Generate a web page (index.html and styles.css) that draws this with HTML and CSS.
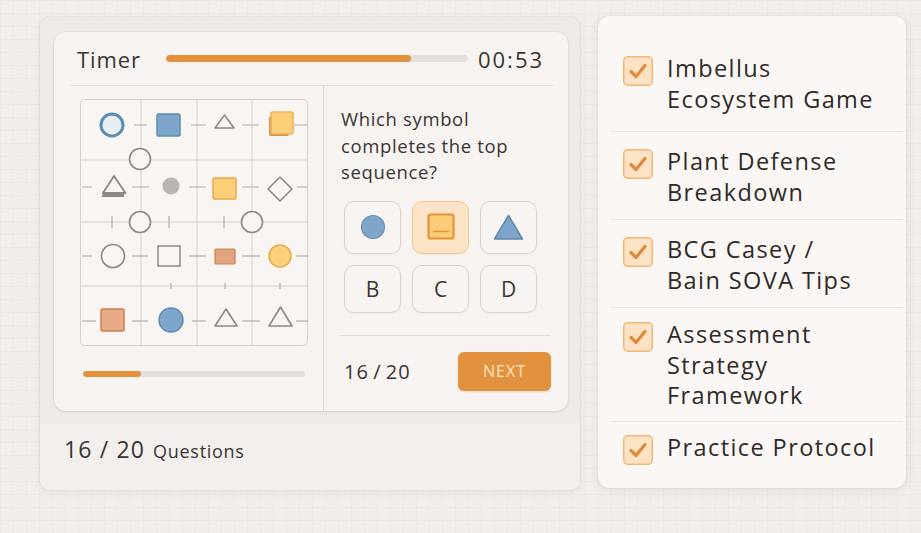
FILE: index.html
```html
<!DOCTYPE html>
<html lang="en">
<head>
<meta charset="utf-8">
<title>Assessment practice</title>
<link rel="stylesheet" href="styles.css">
</head>
<body>
<div class="stage">
  <section class="quiz">
    <div class="quiz-top">
      <div class="card">
        <header class="card-head">
          <span class="title">Timer</span>
          <div class="track timer-track"><div class="fill" style="width:81%"></div></div>
          <span class="time">00:53</span>
        </header>
        <div class="card-body">
          <div class="puzzle-col">
            <svg class="puzzle" width="228" height="247" viewBox="0 0 228 247">
              <rect x="0.5" y="0.5" width="227" height="246" rx="4" fill="#f8f5f3" stroke="#d6d0cd"/>
              <g stroke="#d6d0cd" stroke-width="1">
                <line x1="61" y1="1" x2="61" y2="246"/>
                <line x1="117" y1="1" x2="117" y2="246"/>
                <line x1="172" y1="1" x2="172" y2="246"/>
                <line x1="1" y1="61" x2="227" y2="61"/>
                <line x1="1" y1="123" x2="227" y2="123"/>
                <line x1="1" y1="187" x2="227" y2="187"/>
              </g>
              <g stroke="#b4aeab" stroke-width="1.2">
                <line x1="54" y1="26" x2="67" y2="26"/>
                <line x1="111" y1="26" x2="126" y2="26"/>
                <line x1="162" y1="26" x2="179" y2="26"/>
                <line x1="214" y1="26" x2="228" y2="26"/>
                <line x1="2" y1="88" x2="12" y2="88"/>
                <line x1="52" y1="88" x2="69" y2="88"/>
                <line x1="109" y1="88" x2="126" y2="88"/>
                <line x1="162" y1="88" x2="179" y2="88"/>
                <line x1="217" y1="88" x2="228" y2="88"/>
                <line x1="32" y1="117" x2="32" y2="129"/>
                <line x1="89" y1="117" x2="89" y2="129"/>
                <line x1="144" y1="117" x2="144" y2="129"/>
                <line x1="2" y1="157" x2="12" y2="157"/>
                <line x1="52" y1="157" x2="68" y2="157"/>
                <line x1="109" y1="157" x2="126" y2="157"/>
                <line x1="162" y1="157" x2="180" y2="157"/>
                <line x1="216" y1="157" x2="228" y2="157"/>
                <line x1="91" y1="184" x2="91" y2="190"/>
                <line x1="145" y1="184" x2="145" y2="190"/>
                <line x1="200" y1="184" x2="200" y2="190"/>
                <line x1="2" y1="222" x2="16" y2="222"/>
                <line x1="52" y1="222" x2="68" y2="222"/>
                <line x1="112" y1="222" x2="126" y2="222"/>
                <line x1="162" y1="222" x2="180" y2="222"/>
                <line x1="216" y1="222" x2="228" y2="222"/>
              </g>
              <!-- row 1 -->
              <circle cx="32" cy="26" r="11" fill="#e8eef4" stroke="#5b8cb8" stroke-width="3"/>
              <rect x="77" y="15" width="23" height="22" rx="1.5" fill="#7ea6cb" stroke="#5f8ab3" stroke-width="1.5"/>
              <polygon points="144.5,16 154,29 135,29" fill="#f8f5f3" stroke="#8e8885" stroke-width="1.5" stroke-linejoin="round"/>
              <rect x="189" y="17" width="20" height="20" rx="2" fill="#c9965a"/>
              <rect x="191" y="13" width="22" height="22" rx="2" fill="#fcd079" stroke="#efb252" stroke-width="1.5"/>
              <circle cx="60" cy="60" r="10.5" fill="#f8f5f3" stroke="#8e8885" stroke-width="1.6"/>
              <!-- row 2 -->
              <polygon points="22,98 44,98 44,95 23,95 23,91" fill="#8e8885"/>
              <polygon points="34,77 45.5,94 23,94" fill="#f8f5f3" stroke="#8e8885" stroke-width="1.8" stroke-linejoin="round"/>
              <circle cx="91" cy="87" r="8.5" fill="#b9b4b2"/>
              <rect x="133" y="79" width="23" height="21" rx="1.5" fill="#fcd079" stroke="#e9a94a" stroke-width="1.5"/>
              <polygon points="200,78 212,90 200,102 188,90" fill="#f8f5f3" stroke="#8e8885" stroke-width="1.5" stroke-linejoin="round"/>
              <!-- row 2.5 -->
              <circle cx="60" cy="123" r="10.5" fill="#f8f5f3" stroke="#8e8885" stroke-width="1.6"/>
              <circle cx="172" cy="123" r="10.5" fill="#f8f5f3" stroke="#8e8885" stroke-width="1.6"/>
              <!-- row 3 -->
              <circle cx="33" cy="157" r="11.5" fill="#f8f5f3" stroke="#8e8885" stroke-width="1.6"/>
              <rect x="78" y="147" width="22" height="20" fill="#f8f5f3" stroke="#8e8885" stroke-width="1.5"/>
              <rect x="135" y="150" width="20" height="15" rx="1" fill="#e2a47e" stroke="#c98359" stroke-width="1.2"/>
              <circle cx="200" cy="157" r="11" fill="#fdd27c" stroke="#eaa94a" stroke-width="1.5"/>
              <!-- row 4 -->
              <rect x="21" y="210" width="23" height="22" rx="1.5" fill="#e8ab86" stroke="#c77e58" stroke-width="1.5"/>
              <circle cx="91" cy="221" r="12" fill="#7ea6cb" stroke="#5f8ab3" stroke-width="1.5"/>
              <polygon points="146,210 157,227 135,227" fill="#f8f5f3" stroke="#8e8885" stroke-width="1.6" stroke-linejoin="round"/>
              <polygon points="200.5,208 212,227 189,227" fill="#f8f5f3" stroke="#8e8885" stroke-width="1.6" stroke-linejoin="round"/>
            </svg>
            <div class="track small-track"><div class="fill" style="width:26%"></div></div>
          </div>
          <div class="question-col">
            <p class="question">Which symbol<br>completes the top<br>sequence?</p>
            <div class="options">
              <div class="opt">
                <svg width="26" height="26" viewBox="0 0 26 26"><circle cx="13" cy="13" r="11.5" fill="#7ea6cb" stroke="#6690b8" stroke-width="1.2"/></svg>
              </div>
              <div class="opt sel">
                <svg width="28" height="28" viewBox="0 0 28 28"><rect x="1.5" y="1.5" width="25" height="24" rx="2" fill="#fbcd78" stroke="#e5923c" stroke-width="2.2"/><line x1="6" y1="18.5" x2="22" y2="18.5" stroke="#e5923c" stroke-width="1.4"/></svg>
              </div>
              <div class="opt">
                <svg width="31" height="27" viewBox="0 0 31 27"><polygon points="15.5,1.5 29.5,25 1.5,25" fill="#7ea6cb" stroke="#5f88ae" stroke-width="1.5" stroke-linejoin="round"/></svg>
              </div>
              <div class="opt">B</div>
              <div class="opt">C</div>
              <div class="opt">D</div>
            </div>
            <div class="q-foot">
              <span class="count">16&thinsp;/&thinsp;20</span>
              <button class="next" type="button">NEXT</button>
            </div>
          </div>
        </div>
      </div>
    </div>
    <footer class="quiz-foot"><span class="big">16 / 20</span><span class="small">Questions</span></footer>
  </section>

  <aside class="checklist">
    <ul>
      <li><svg class="box" width="30" height="30" viewBox="0 0 30 30"><rect x="0.75" y="0.75" width="28.5" height="28.5" rx="4" fill="#fde3c6" stroke="#f2b776" stroke-width="1.5"/><polyline points="8,15.5 13,20.5 22,9.5" fill="none" stroke="#e0893a" stroke-width="3.2" stroke-linecap="round" stroke-linejoin="round"/></svg><span>Imbellus<br>Ecosystem Game</span></li>
      <li><svg class="box" width="30" height="30" viewBox="0 0 30 30"><rect x="0.75" y="0.75" width="28.5" height="28.5" rx="4" fill="#fde3c6" stroke="#f2b776" stroke-width="1.5"/><polyline points="8,15.5 13,20.5 22,9.5" fill="none" stroke="#e0893a" stroke-width="3.2" stroke-linecap="round" stroke-linejoin="round"/></svg><span>Plant Defense<br>Breakdown</span></li>
      <li><svg class="box" width="30" height="30" viewBox="0 0 30 30"><rect x="0.75" y="0.75" width="28.5" height="28.5" rx="4" fill="#fde3c6" stroke="#f2b776" stroke-width="1.5"/><polyline points="8,15.5 13,20.5 22,9.5" fill="none" stroke="#e0893a" stroke-width="3.2" stroke-linecap="round" stroke-linejoin="round"/></svg><span>BCG Casey /<br>Bain SOVA Tips</span></li>
      <li><svg class="box" width="30" height="30" viewBox="0 0 30 30"><rect x="0.75" y="0.75" width="28.5" height="28.5" rx="4" fill="#fde3c6" stroke="#f2b776" stroke-width="1.5"/><polyline points="8,15.5 13,20.5 22,9.5" fill="none" stroke="#e0893a" stroke-width="3.2" stroke-linecap="round" stroke-linejoin="round"/></svg><span>Assessment<br>Strategy<br>Framework</span></li>
      <li><svg class="box" width="30" height="30" viewBox="0 0 30 30"><rect x="0.75" y="0.75" width="28.5" height="28.5" rx="4" fill="#fde3c6" stroke="#f2b776" stroke-width="1.5"/><polyline points="8,15.5 13,20.5 22,9.5" fill="none" stroke="#e0893a" stroke-width="3.2" stroke-linecap="round" stroke-linejoin="round"/></svg><span>Practice Protocol</span></li>
    </ul>
  </aside>
</div>
</body>
</html>
```

FILE: styles.css
```css
html, body {
  margin: 0;
  padding: 0;
}

body {
  width: 921px;
  height: 533px;
  overflow: hidden;
  background-color: #f2eeec;
  background-image:
    linear-gradient(rgba(120, 100, 90, 0.04) 1px, transparent 1px),
    linear-gradient(90deg, rgba(120, 100, 90, 0.04) 1px, transparent 1px);
  background-size: 13px 13px;
  font-family: "Open Sans", "Liberation Sans", sans-serif;
  color: #383331;
}

.stage {
  display: flex;
  align-items: flex-start;
  gap: 18px;
  padding: 16px 0 0 40px;
}

/* ---------- left quiz block ---------- */
.quiz {
  width: 540px;
  margin-top: 1px;
  background: #eeeae8;
  border-radius: 10px;
  overflow: hidden;
  box-shadow: 0 0 0 1px rgba(90, 70, 60, 0.05), 0 3px 10px rgba(90, 70, 60, 0.07);
}

.quiz-top {
  padding: 15px 12px 13px 14px;
}

.card {
  height: 379px;
  display: flex;
  flex-direction: column;
  background: #f7f3f1;
  border-radius: 12px;
  box-shadow: 0 1px 3px rgba(90, 70, 60, 0.12), 0 0 0 1px rgba(90, 70, 60, 0.04);
}

.card-head {
  height: 54px;
  box-sizing: border-box;
  margin: 0 15px 0 17px;
  padding: 0 9px 0 6px;
  display: flex;
  align-items: center;
  border-bottom: 1px solid #e2dcd9;
}

.title {
  font-size: 22px;
  letter-spacing: 0.04em;
  color: #3a3533;
}

.time {
  font-size: 22px;
  letter-spacing: 0.09em;
  color: #3a3533;
}

.track {
  height: 7px;
  border-radius: 4px;
  background: #e4dfdc;
  overflow: hidden;
}

.fill {
  height: 100%;
  border-radius: 4px;
  background: #e3913c;
}

.timer-track {
  flex: 1;
  margin: 0 10px 0 25px;
}

.card-body {
  flex: 1;
  display: flex;
}

.puzzle-col {
  width: 270px;
  box-sizing: border-box;
  padding: 13px 0 0 26px;
  border-right: 1px solid #ddd7d4;
}

.puzzle {
  display: block;
}

.small-track {
  width: 222px;
  height: 6px;
  margin: 25px 0 0 3px;
}

.question-col {
  flex: 1;
  display: flex;
  flex-direction: column;
  padding: 20px 17px 0 16px;
}

.question {
  margin: 0 0 0 1px;
  font-size: 18.5px;
  line-height: 26.5px;
  letter-spacing: 0.035em;
  color: #3a3533;
}

.options {
  margin: 15px 0 0 4px;
  display: grid;
  grid-template-columns: repeat(3, 57px);
  grid-template-rows: 53px 48px;
  gap: 11px;
}

.opt {
  display: flex;
  align-items: center;
  justify-content: center;
  border: 1px solid #d9d3d0;
  border-radius: 10px;
  background: #f8f4f2;
  box-shadow: 0 1px 2px rgba(90, 70, 60, 0.05);
  font-size: 21px;
  color: #3a3634;
}

.opt svg {
  display: block;
}

.opt.sel {
  background: #fde4c6;
  border-color: #f3c790;
}

.q-foot {
  margin-top: 22px;
  padding: 16px 0 0 4px;
  border-top: 1px solid #e2dcd9;
  display: flex;
  align-items: center;
  justify-content: space-between;
}

.count {
  font-size: 20px;
  letter-spacing: 0.05em;
  color: #3a3533;
}

.next {
  width: 93px;
  height: 39px;
  border: none;
  border-radius: 6px;
  background: #e2913e;
  color: #fde5bf;
  font-family: "Open Sans", "Liberation Sans", sans-serif;
  font-size: 16px;
  letter-spacing: 0.06em;
  box-shadow: 0 1px 2px rgba(150, 80, 20, 0.15);
}

.quiz-foot {
  height: 66px;
  box-sizing: border-box;
  padding: 9px 0 0 24px;
  background: #f3efed;
  display: flex;
  align-items: baseline;
  gap: 8px;
}

.big {
  font-size: 23px;
  letter-spacing: 0.05em;
  color: #3a3533;
}

.small {
  font-size: 18px;
  letter-spacing: 0.04em;
  color: #3a3533;
}

/* ---------- right checklist ---------- */
.checklist {
  width: 308px;
  height: 472px;
  box-sizing: border-box;
  padding: 23px 3px 0 12px;
  background: #fbf7f5;
  border-radius: 12px;
  box-shadow: 0 2px 10px rgba(90, 70, 60, 0.1), 0 0 0 1px rgba(90, 70, 60, 0.04);
}

.checklist ul {
  list-style: none;
  margin: 0;
  padding: 0;
}

.checklist li {
  display: flex;
  align-items: flex-start;
  gap: 14px;
  padding: 14px 0 12px 13px;
  border-bottom: 1px solid #ebe5e2;
  font-size: 23.5px;
  line-height: 30.5px;
  letter-spacing: 0.06em;
  color: #2e2a28;
}

.checklist li:first-child {
  padding-bottom: 17px;
}

.checklist li:nth-child(4) {
  padding: 11px 0 10px 13px;
}

.checklist li:last-child {
  padding-top: 10px;
  border-bottom: none;
}

.box {
  flex: none;
  margin-top: 3px;
}
```
